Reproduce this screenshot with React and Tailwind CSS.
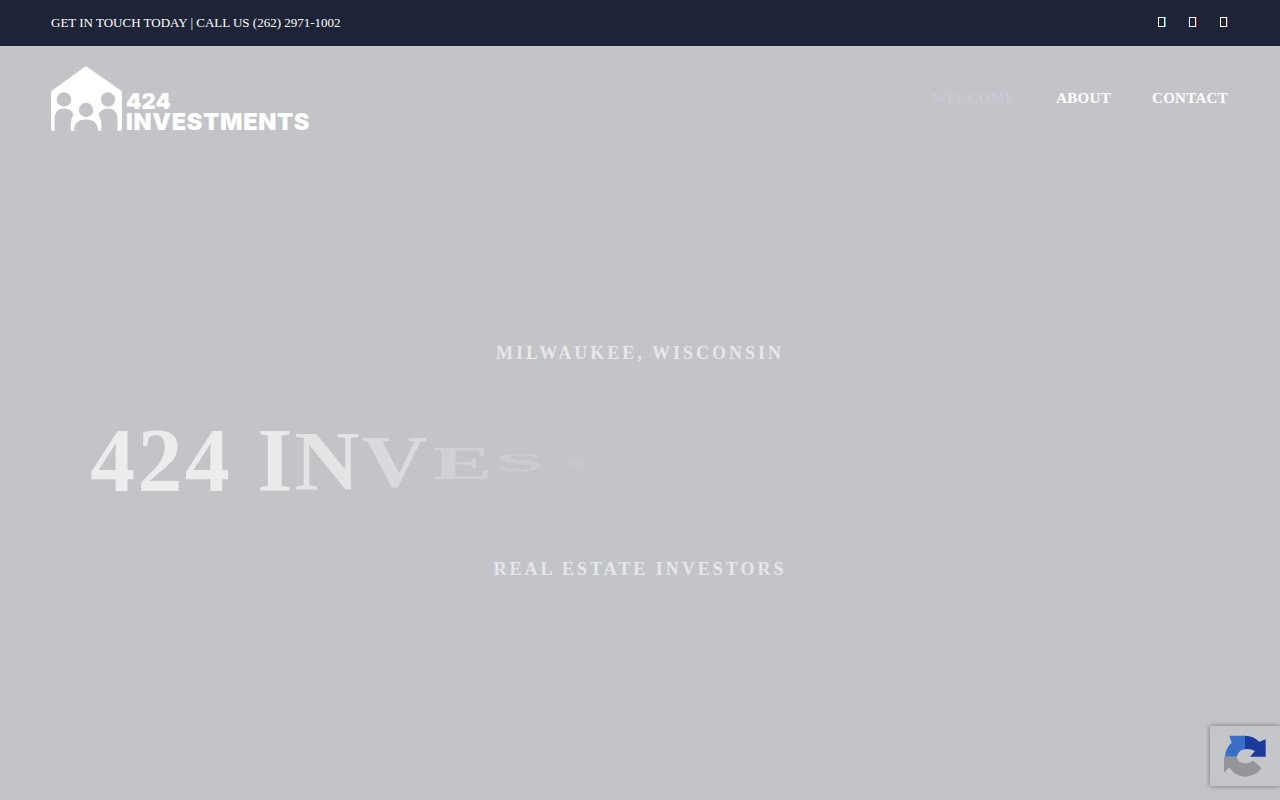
const letters = [
  ["4", 1, 0.68, 0, 0], ["2", 1, 0.68, 0, 0], ["4", 1, 0.68, 0, 0], ["\u00a0", 1, 0.68, 0, 0],
  ["I", 1, 0.66, 0, 0], ["N", 0.95, 0.54, 0, 0], ["V", 0.83, 0.38, 1, 0], ["E", 0.52, 0.22, 2, 3], ["S", 0.28, 0.15, 2, 3], ["T", 0.13, 0.06, 2, 3],
  ["M", 0.02, 0, 0, 0], ["E", 0, 0, 0, 0], ["N", 0, 0, 0, 0], ["T", 0, 0, 0, 0], ["S", 0, 0, 0, 0],
];

function Logo() {
  return (
    <div className="flex items-end">
      <svg width="72" height="66" viewBox="51 66 72 66" className="shrink-0">
        <path d="M84 67.5 Q86 65.5 88 67.5 L121 90.5 Q122 91.5 122 93 V129 Q122 131 120 131 H53 Q51 131 51 129 V93 Q51 91.5 52 90.5 Z" fill="#fff" />
        <g fill="#c3c4c8">
          <circle cx="64" cy="99.5" r="7.2" />
          <circle cx="86" cy="110" r="7.2" />
          <circle cx="108" cy="99.5" r="7.2" />
          <path d="M54.5 131 V120 Q54.5 108.5 64 108.5 Q71 108.5 73.5 114.5 Q69.5 121 71 131 Z M74 131 Q74 119.5 86 119.5 Q98 119.5 98 131 Z M101 131 Q102.5 121 98.5 114.5 Q101 108.5 108 108.5 Q117.5 108.5 117.5 120 V131 Z" />
        </g>
      </svg>
      <div className="flex flex-col ml-[3px] font-['Inter',sans-serif] font-black text-white">
        <span className="text-[22px] leading-[17px] tracking-[0.1px] mb-[2px]">424</span>
        <span className="text-[23.5px] leading-[19px] mb-[1px] tracking-[0.7px]">INVESTMENTS</span>
      </div>
    </div>
  );
}

function Tofu({ shadow }) {
  return <span className={`block w-[7px] h-[10px] border border-white ${shadow}`} />;
}

function Recaptcha() {
  return (
    <div className="fixed right-0 bottom-[14px] w-[70px] h-[60px] bg-[#c5c6ca] rounded-l-[2px] shadow-[0_0_5px_rgba(90,90,90,0.75)] flex items-center justify-center">
      <svg width="42" height="42" viewBox="72 45 126 126">
        <path d="M135 47 V88 Q118 88 110 110 H75 Q76 85 95 68 L88 47 Z" fill="#3a6fc6" />
        <path d="M135 47 Q160 47 178 65 L197 58 V110 H150 L165 93 Q150 85 135 88 Z" fill="#1c3a9c" />
        <path d="M72 110 H110 Q115 130 135 130 Q150 130 160 122 L185 145 Q165 170 135 170 Q105 170 88 142 L72 158 Z" fill="#949599" />
      </svg>
    </div>
  );
}

export default function App() {
  return (
    <div className="h-screen overflow-hidden flex flex-col bg-[#c3c4c8] font-['Liberation_Serif',serif]">
      <div className="h-[46px] shrink-0 bg-[#1e2438] flex items-center justify-between pl-[51px] pr-[53px] pb-[1px]">
        <p className="text-[13px] text-white">GET IN TOUCH TODAY | CALL US (262) 2971-1002</p>
        <div className="flex gap-[24px] pb-[1px]">
          <Tofu shadow="shadow-[1px_0_0_#14b8c8]" />
          <Tofu shadow="shadow-[-1px_0_0_#2222cc,1px_0_0_#b02040]" />
          <Tofu shadow="shadow-[1px_0_0_#90303a]" />
        </div>
      </div>

      <header className="shrink-0 flex items-start justify-between pl-[51px] pr-[52px] pt-[20px]">
        <Logo />
        <nav className="flex gap-[41px] pt-[22px] text-[15px] font-bold leading-[20px] tracking-[0.3px] text-white">
          <a className="text-[#c7cad5]">WELCOME</a>
          <a>ABOUT</a>
          <a>CONTACT</a>
        </nav>
      </header>

      <main className="flex flex-col items-center pt-[209px]">
        <p className="text-[18px] leading-[24px] font-bold tracking-[3px] text-[#e6e7e9]">MILWAUKEE, WISCONSIN</p>
        <h1 className="w-[1100px] mt-[51px] text-[90px] leading-[90px] font-bold tracking-[2.4px] text-white whitespace-nowrap">
          {letters.map(([c, sy, o, dy, dx], i) => (
            <span key={i} className="inline-block" style={{ transform: `translate(${dx}px, ${dy}px) scaleY(${sy})`, opacity: o }}>{c}</span>
          ))}
        </h1>
        <p className="mt-[51px] text-[18px] leading-[24px] font-bold tracking-[3px] text-[#e6e7e9]">REAL ESTATE INVESTORS</p>
      </main>

      <Recaptcha />
    </div>
  );
}
